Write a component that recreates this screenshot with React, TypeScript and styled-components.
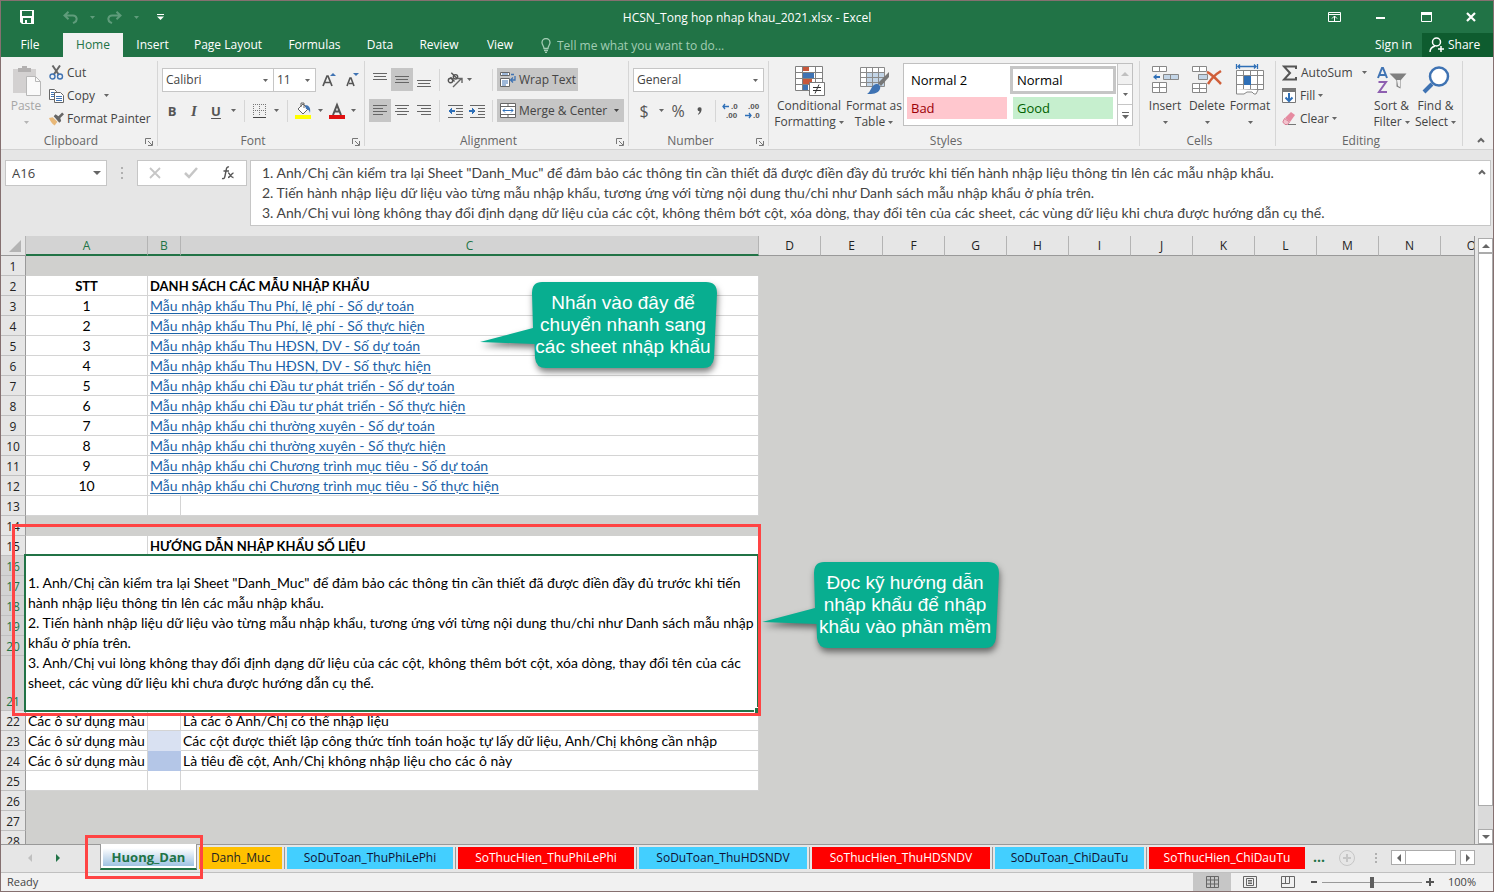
import React from "react";
import styled, { createGlobalStyle, css } from "styled-components";

const ui = `"Open Sans", "Noto Sans", sans-serif`;
const sheetFont = `Lato, "Noto Sans", sans-serif`;
const green = "#217346";

const Global = createGlobalStyle`
  * { box-sizing: border-box; }
  body { margin: 0; font-family: ${ui}; font-size: 12px; line-height: 16px; color: #444; }
  button, input, select, textarea { font: inherit; color: inherit; margin: 0; padding: 0; border: 0; background: none; }
  svg { display: block; flex: none; }
`;

/* ---------- shell ---------- */
const Shell = styled.div`
  display: flex;
  flex-direction: column;
  height: 100vh;
  overflow: hidden;
  border: 1px solid #857070;
  background: #e6e6e6;
`;
const Header = styled.header`
  background: ${green};
  color: #fff;
`;
const TitleBar = styled.div`
  display: grid;
  grid-template-columns: 1fr auto 1fr;
  align-items: center;
  height: 32px;
`;
const Title = styled.h1`
  margin: 0;
  padding-top: 2px;
  font-size: 12px;
  font-weight: 400;
`;
const QuickBar = styled.div`
  display: flex;
  align-items: center;
  height: 28px;
  padding-left: 19px;
`;
const WindowButtons = styled.div`
  display: flex;
  justify-content: flex-end;
`;
const BarButton = styled.button<{ $w: number; $dim?: boolean }>`
  display: flex;
  align-items: center;
  width: ${(p) => p.$w}px;
  height: 24px;
  justify-content: ${(p) => (p.$w > 43 ? "center" : "flex-start")};
  color: ${(p) => (p.$dim ? "#5f9c7b" : "#fff")};
`;
const TabBar = styled.nav`
  display: flex;
  height: 24px;
`;
const RibbonTab = styled.button<{ $w: number; $active?: boolean }>`
  width: ${(p) => p.$w}px;
  padding-right: ${(p) => (p.$w > 61 && p.$w < 63 ? 4 : 0)}px;
  color: ${(p) => (p.$active ? green : "#fff")};
  background: ${(p) => (p.$active ? "#f1f1f1" : "transparent")};
`;
const TellMe = styled.label`
  display: flex;
  align-items: center;
  gap: 6px;
  padding-left: 14px;
  color: #a2cdb4;
  input { width: 190px; height: 20px; }
  input::placeholder { color: #a2cdb4; opacity: 1; }
`;
const Account = styled.div`
  display: flex;
  margin-left: auto;
`;
const SignIn = styled.button`
  padding: 0 10px;
`;
const Share = styled.button`
  display: flex;
  align-items: center;
  gap: 3px;
  width: 71px;
  padding-left: 7px;
  background: #0e5c2f;
`;

/* ---------- ribbon ---------- */
const Ribbon = styled.div`
  display: flex;
  height: 93px;
  padding: 4px 0 3px;
  background: #f1f1f1;
  border-bottom: 1px solid #d2d2d2;
`;
const GroupBox = styled.section<{ $w: number }>`
  position: relative;
  display: flex;
  flex-direction: column;
  width: ${(p) => p.$w}px;
  height: 85px;
  flex: none;
  border-right: 1px solid #d6d6d6;
`;
const GroupBody = styled.div`
  display: flex;
  flex: none;
  height: 72px;
  padding: 0 4px;
`;
const GroupLabel = styled.footer`
  height: 13px;
  padding-right: 16px;
  text-align: center;
  color: #666;
`;
const Launcher = styled.button`
  position: absolute;
  right: 4px;
  bottom: 0;
  width: 8px;
  height: 8px;
`;
const BigButton = styled.button<{ $w: number; $off?: boolean }>`
  display: flex;
  flex-direction: column;
  align-items: center;
  flex: none;
  width: ${(p) => p.$w}px;
  height: 70px;
  white-space: nowrap;
  color: ${(p) => (p.$off ? "#a6a6a6" : "#444")};
`;
const BigIcon = styled.span`
  display: flex;
  align-items: center;
  height: 34px;
  margin: 2px 0 1px;
`;
const BigLine = styled.span`
  display: flex;
  align-items: center;
  justify-content: center;
  gap: 3px;
  height: 16px;
`;
const Stack = styled.div`
  display: flex;
  flex-direction: column;
  padding: 0 3px 0 2px;
`;
const SmallButton = styled.button<{ $space?: number }>`
  display: flex;
  align-items: center;
  gap: 3px;
  height: 23px;
  white-space: nowrap;
  svg:last-child:not(:first-child) { margin-left: ${(p) => p.$space ?? 0}px; }
`;
const Rows = styled.div`
  display: flex;
  flex-direction: column;
  gap: 8px;
  padding-top: 7px;
  flex: 1;
`;
const Row = styled.div`
  display: flex;
  align-items: center;
  height: 23px;
`;
const Tool = styled.button<{ $w: number; $on?: boolean }>`
  display: flex;
  align-items: center;
  justify-content: center;
  flex: none;
  width: ${(p) => p.$w}px;
  height: 23px;
  background: ${(p) => (p.$on ? "#c6c6c6" : "transparent")};
`;
const Wide = styled(Tool)`
  justify-content: flex-start;
  gap: 3px;
  padding-left: 3px;
  white-space: nowrap;
  svg:last-child:not(:first-child) { margin-left: 4px; }
`;
const Rule = styled.span<{ $l: number; $r: number }>`
  width: 1px;
  height: 22px;
  margin: 0 ${(p) => p.$r}px 0 ${(p) => p.$l}px;
  background: #d6d6d6;
`;
const Letter = styled.span<{ $kind?: "b" | "i" | "u" }>`
  font-size: 13px;
  font-weight: 700;
  color: #555;
  ${(p) => p.$kind === "i" && css`font-style: italic; font-family: "Liberation Serif", serif; font-size: 15px;`}
  ${(p) => p.$kind === "u" && css`text-decoration: underline; text-underline-offset: 2px;`}
`;
const Sign = styled.span`
  font-size: 16px;
  color: #555;
`;
const ComboBox = styled.label<{ $w: number }>`
  position: relative;
  display: block;
  width: ${(p) => p.$w}px;
  height: 24px;
  margin-right: -1px;
  background: #fff;
  border: 1px solid #c6c6c6;
  select { width: 100%; height: 100%; padding-left: 3px; appearance: none; outline: 0; }
  svg { position: absolute; right: 5px; top: 10px; pointer-events: none; }
`;

const Gallery = styled.div`
  display: flex;
  width: 230px;
  height: 63px;
  margin-top: 2px;
  background: #fff;
  border: 1px solid #c0c0c0;
`;
const GalleryGrid = styled.div`
  display: grid;
  grid-template-columns: 106px 106px;
  grid-template-rows: 28px 28px;
  padding-top: 2px;
`;
const Swatch = styled.button<{ $bg?: string; $fg: string; $on?: boolean }>`
  margin: ${(p) => (p.$on ? "0" : "3px")};
  padding-left: ${(p) => (p.$on ? 4 : 4)}px;
  text-align: left;
  font-size: 13px;
  line-height: 20px;
  color: ${(p) => p.$fg};
  background: ${(p) => p.$bg ?? "#fff"};
  border: ${(p) => (p.$on ? "3px solid #c6c6c6" : "0")};
`;
const GallerySteps = styled.div`
  display: grid;
  grid-template-rows: 21px 20px 20px;
  width: 15px;
  margin-left: auto;
  border-left: 1px solid #c6c6c6;
  button { display: grid; place-items: center; border-bottom: 1px solid #c6c6c6; }
  button:first-child { background: #f1f1f1; }
  button:last-child { border-bottom: 0; }
`;
const Collapse = styled.button`
  display: grid;
  place-items: center;
  align-self: flex-end;
  width: 20px;
  height: 12px;
  margin: 0 2px 0 auto;
`;

/* ---------- formula bar ---------- */
const FormulaBar = styled.div`
  display: flex;
  align-items: flex-start;
  padding: 10px 2px 10px 4px;
  background: #e6e6e6;
`;
const NameBox = styled.label`
  position: relative;
  width: 102px;
  height: 26px;
  background: #fff;
  border: 1px solid #c6c6c6;
  input { width: 80px; height: 24px; padding-left: 6px; outline: 0; font-size: 13px; }
  svg { position: absolute; right: 5px; top: 8px; }
`;
const Grip = styled.span`
  display: flex;
  align-items: center;
  justify-content: center;
  width: 30px;
  height: 26px;
`;
const FxBox = styled.div`
  display: flex;
  align-items: center;
  justify-content: space-around;
  width: 110px;
  height: 26px;
  margin-right: 3px;
  background: #fff;
  border: 1px solid #c6c6c6;
`;
const FormulaField = styled.div`
  display: flex;
  flex: 1;
  height: 66px;
  background: #fff;
  border: 1px solid #c6c6c6;
  textarea {
    flex: 1;
    height: 64px;
    padding: 2px 0 0 11px;
    resize: none;
    outline: 0;
    overflow: hidden;
    white-space: nowrap;
    font-family: ${sheetFont};
    font-size: 14px;
    line-height: 20px;
  }
`;
const Expand = styled.button`
  display: grid;
  place-items: center;
  width: 16px;
  height: 22px;
`;

/* ---------- grid ---------- */
const GridArea = styled.main`
  position: relative;
  display: flex;
  flex: 1;
  min-height: 0;
`;
const GridView = styled.div`
  flex: 1;
  min-width: 0;
  overflow: hidden;
  background: #d0d0ce;
  border-right: 1px solid #999;
`;
const Sheet = styled.table`
  width: 0;
  table-layout: fixed;
  border-collapse: separate;
  border-spacing: 0;
  color: #000;
  font-family: ${sheetFont};
  font-size: 14px;
  line-height: 18px;
`;
const ColHead = styled.th<{ $sel?: boolean }>`
  height: 20px;
  padding: 0;
  font: 400 12px/17px ${ui};
  color: ${(p) => (p.$sel ? green : "#222")};
  background: ${(p) => (p.$sel ? "#d3d3d3" : "#e6e6e6")};
  border-right: 1px solid #b4b4b4;
  border-bottom: ${(p) => (p.$sel ? `2px solid ${green}` : "1px solid #999")};
`;
const Corner = styled.th`
  padding: 4px 3px 3px 8px;
  background: #e6e6e6;
  border-right: 1px solid #b4b4b4;
  border-bottom: 1px solid #999;
`;
const RowHead = styled.th<{ $sel?: boolean; $h?: number }>`
  height: ${(p) => p.$h ?? 20}px;
  padding: 0;
  vertical-align: bottom;
  font: 400 12px/16px ${ui};
  color: ${(p) => (p.$sel ? green : "#222")};
  background: ${(p) => (p.$sel ? "#d3d3d3" : "#e6e6e6")};
  border-right: 1px solid #999;
  border-bottom: 1px solid #c0c0c0;
`;
const Cell = styled.td<{ $center?: boolean; $fill?: string }>`
  padding: 0 2px;
  white-space: nowrap;
  text-align: ${(p) => (p.$center ? "center" : "left")};
  background: ${(p) => p.$fill ?? "#fff"};
  border-right: 1px solid ${(p) => p.$fill ?? "#d4d4d4"};
  border-bottom: 1px solid ${(p) => p.$fill ?? "#d4d4d4"};
`;
const Heading = styled(Cell)`
  font-size: 13px;
  font-weight: 700;
`;
const Blank = styled.td`
  padding: 0;
  background: #d0d0ce;
`;
const SheetLink = styled.a`
  color: #1c63a8;
  text-underline-offset: 2px;
`;
const Merged = styled.td`
  position: relative;
  padding: 0 2px 2px;
  line-height: 20px;
  white-space: pre;
  background: #fff;
  &::before {
    content: "";
    position: absolute;
    inset: -2px 0 -1px -2px;
    border: 2px solid ${green};
  }
  &::after {
    content: "";
    position: absolute;
    right: -1px;
    bottom: -2px;
    width: 5px;
    height: 5px;
    background: ${green};
    border: solid #fff;
    border-width: 1px 0 0 1px;
  }
`;
const VScroll = styled.div`
  display: flex;
  flex-direction: column;
  width: 18px;
  padding: 2px 1px 0 3px;
  background: #e6e6e6;
`;
const ScrollButton = styled.button`
  display: grid;
  place-items: center;
  flex: none;
  width: 15px;
  height: 15px;
  background: #fff;
  border: 1px solid #ababab;
`;
const VTrack = styled.div`
  flex: 1;
  width: 15px;
  background: #dadada;
`;
const VThumb = styled.div`
  height: 96%;
  background: #fff;
  border: 1px solid #ababab;
`;

/* ---------- annotations ---------- */
const RedFrame = styled.div`
  position: absolute;
  left: 11px;
  top: 288px;
  width: 749px;
  height: 192px;
  border: 3px solid #ff4444;
`;
const CalloutBox = styled.div<{ $x: number; $y: number }>`
  position: absolute;
  left: ${(p) => p.$x}px;
  top: ${(p) => p.$y}px;
  width: 238px;
  height: 87px;
  svg { position: absolute; left: 0; top: 0; overflow: visible; filter: drop-shadow(1px 4px 3px rgba(0, 0, 0, 0.5)); }
  p {
    position: relative;
    margin: 0 0 0 48px;
    padding-top: 10px;
    text-align: center;
    white-space: pre;
    color: #fff;
    font: 19px/22px "Liberation Sans", Arial, sans-serif;
  }
`;

/* ---------- sheet tabs and status ---------- */
const TabStrip = styled.div`
  display: flex;
  height: 28px;
  border-top: 1px solid #999;
  background: #e6e6e6;
`;
const TabNav = styled.div`
  display: flex;
  align-items: center;
  gap: 20px;
  width: 99px;
  height: 25px;
  padding-left: 25px;
`;
const ActiveTab = styled.button`
  position: relative;
  width: 97px;
  height: 26px;
  margin: -1px 2px 0 0;
  padding: 4px 2px 3px;
  background: #fff;
  border: solid #999;
  border-width: 0 1px;
  border-bottom: 2px solid ${green};
  color: ${green};
  font-size: 13px;
  font-weight: 700;
  span {
    display: block;
    line-height: 18px;
    background: linear-gradient(#fff, #cfe0f0 50%, #9fc3e2);
  }
  &::after {
    content: "";
    position: absolute;
    inset: -9px -7px -11px -16px;
    border: 3px solid #ff4444;
  }
`;
const SheetTab = styled.button<{ $w: number; $bg: string; $fg: string }>`
  width: ${(p) => p.$w}px;
  height: 22px;
  margin-top: 2px;
  background: ${(p) => p.$bg};
  color: ${(p) => p.$fg};
`;
const TabGap = styled.span`
  width: 1px;
  height: 22px;
  margin: 2px 2px 0;
  background: #999;
`;
const StripEnd = styled.div`
  display: flex;
  align-items: center;
  height: 25px;
  margin-left: auto;
  padding-right: 18px;
`;
const AddSheet = styled.button`
  margin-right: 6px;
`;
const HThumb = styled.div`
  width: 51px;
  height: 15px;
  margin: 0 4px 0 -1px;
  background: #fff;
  border: 1px solid #ababab;
`;
const More = styled.button`
  height: 24px;
  margin-left: 8px;
  color: ${green};
  font-weight: 700;
  font-size: 14px;
`;
const Status = styled.footer`
  display: flex;
  align-items: center;
  height: 19px;
  padding: 0 17px 0 6px;
  border-top: 1px solid #c0c0c0;
  background: #f1f1f1;
  font-size: 11px;
`;
const ViewButton = styled.button<{ $on?: boolean }>`
  display: grid;
  place-items: center;
  width: 38px;
  height: 18px;
  background: ${(p) => (p.$on ? "#c6c6c6" : "transparent")};
`;
const StatusEnd = styled.div`
  display: flex;
  align-items: center;
  margin-left: auto;
`;
const Slider = styled.input`
  width: 100px;
  height: 12px;
  margin: 0 3px;
  appearance: none;
  background: linear-gradient(#999, #999) center / 100% 1px no-repeat;
  &::-webkit-slider-thumb { appearance: none; width: 4px; height: 11px; background: #5f5f5f; }
`;
const ZoomValue = styled.output`
  width: 41px;
  text-align: right;
`;

/* ---------- icons ---------- */
const Arrow = ({ c = "#666", w = 5 }: { c?: string; w?: number }) => (
  <svg width={w} height="3" viewBox="0 0 6 3" preserveAspectRatio="none"><path d="M0 0h6L3 3z" fill={c} /></svg>
);
const Tri = ({ d, c = "#666" }: { d: "u" | "d" | "l" | "r"; c?: string }) => {
  const path = { u: "M0 6h8L4 2z", d: "M0 2h8L4 6z", l: "M6 0v8L2 4z", r: "M2 0v8l4-4z" }[d];
  return <svg width="8" height="8" viewBox="0 0 8 8"><path d={path} fill={c} /></svg>;
};
const Lines = ({ rows, top = 0 }: { rows: [number, number][]; top?: number }) => (
  <svg width="15" height="17" viewBox="0 0 15 17" shapeRendering="crispEdges">
    {rows.map(([x, w], i) => <rect key={i} x={x} y={top + i * 3} width={w} height="1" fill="#666" />)}
  </svg>
);
const Caret = () => (
  <svg width="8" height="6" viewBox="0 0 8 6" fill="none" stroke="#666" strokeWidth="2"><path d="M1 5l3-3 3 3" /></svg>
);
const SaveIcon = () => (
  <svg width="14" height="14" viewBox="0 0 14 14"><path fill="#fff" fillRule="evenodd" d="M0 0h14v14H2l-2-2zM2 1v5h10V1zM3 8v5h2v-3h2v3h4V8z" /></svg>
);
const UndoIcon = ({ flip }: { flip?: boolean }) => (
  <svg width="15" height="13" viewBox="0 0 15 13" fill="none" stroke="currentColor" strokeWidth="2" transform={flip ? "scale(-1 1)" : undefined}>
    <path d="M5.500 .8L1.500 4.500l4 3.700M1.500 4.500H10c4 0 5 5 1.500 6.800L10 12" />
  </svg>
);
const PasteIcon = () => (
  <svg width="29" height="31" viewBox="0 0 29 31">
    <path d="M1 4h23v24H1z" fill="#d3d1d1" />
    <path d="M6 3h4V1h5v2h4v4H6z" fill="#b3b1b1" />
    <path d="M14.500 11.500h9l5 5v14h-14z" fill="#fafafa" stroke="#b8b8b8" />
    <path d="M23.500 11.500v5h5" fill="none" stroke="#b8b8b8" />
  </svg>
);
const CutIcon = () => (
  <svg width="15" height="15" viewBox="0 0 15 15" fill="none">
    <path d="M3.500 .5l6.500 9.500M11 .5L4.500 10" stroke="#666" strokeWidth="2" />
    <circle cx="3.500" cy="11.500" r="2.500" stroke="#3f73b3" strokeWidth="1.400" /><circle cx="11" cy="11.500" r="2.500" stroke="#3f73b3" strokeWidth="1.400" />
  </svg>
);
const CopyIcon = () => (
  <svg width="15" height="15" viewBox="0 0 15 15" stroke="#666">
    <path d="M.5 1.500h5l2 2v8h-7z" fill="#fff" /><path d="M2 4.500h3M2 6.500h3M2 8.500h3" stroke="#3f73b3" />
    <path d="M5.500 4.500h6l3 3v7h-9z" fill="#fff" /><path d="M7 8.500h6M7 10.500h6M7 12.500h6" stroke="#3f73b3" />
  </svg>
);
const BrushIcon = () => (
  <svg width="15" height="14" viewBox="0 0 16 14">
    <path d="M0 6l4-1 5 5-3 4C3 12 1 9 0 6z" fill="#e8b878" /><path d="M5 4l2-2 3 2 4-4 2 2-4 4 1 3-2 2z" fill="#666" />
  </svg>
);
const SizeA = ({ up }: { up?: boolean }) => (
  <svg width="15" height="16" viewBox="0 0 15 16">
    {up ? <path d="M1 14L5 4h1l4 10M3 10.500h5" fill="none" stroke="#555" strokeWidth="1.700" /> : <path d="M2 14l3-8h1l3 8M4 11.500h4" fill="none" stroke="#555" strokeWidth="1.600" />}
    <path d={up ? "M8 4h6l-3-3z" : "M8 1h6l-3 3z"} fill="#3f73b3" />
  </svg>
);
const BordersIcon = () => (
  <svg width="14" height="14" viewBox="0 0 14 14" stroke="#777" shapeRendering="crispEdges">
    <path d="M.5 0v12M6.500 0v12M12.500 0v12M0 .5h13M0 6.500h13" strokeDasharray="1 1" /><path d="M0 13.500h13" stroke="#444" strokeWidth="1" />
  </svg>
);
const FillIcon = () => (
  <svg width="17" height="17" viewBox="0 0 17 17">
    <path d="M3 7l5-5 5 5-5 5z" fill="#fff" stroke="#666" /><path d="M6 5V1h3v5" fill="none" stroke="#666" />
    <path d="M10 3c4 0 6 3 5 8-1-3-2-4-4-4z" fill="#3f73b3" /><path d="M0 13h16v4H0z" fill="#ffff00" />
  </svg>
);
const FontColorIcon = () => (
  <svg width="16" height="17" viewBox="0 0 16 17">
    <path d="M4 13L8 3l4 10M5.500 9.500h5" fill="none" stroke="#555" strokeWidth="2" /><path d="M0 13h16v4H0z" fill="#e01010" />
  </svg>
);
const OrientIcon = () => (
  <svg width="16" height="16" viewBox="0 0 16 16" fill="none" stroke="#555" strokeWidth="1.400">
    <circle cx="3.500" cy="8.500" r="2.200" /><path d="M3.500 5.200l4 4.200" /><circle cx="8.500" cy="4.800" r="2.200" /><path d="M4.300 0.800l5.800 5.700" />
    <path d="M6 15l8-8M10.500 6.500H15V11" stroke="#666" />
  </svg>
);
const IndentIcon = ({ right }: { right?: boolean }) => (
  <svg width="17" height="14" viewBox="0 0 17 14" shapeRendering="crispEdges">
    <path d="M1 1.500h15M9 4.500h7M9 7.500h7M9 10.500h7M1 13.500h15" stroke="#666" fill="none" />
    <path d={right ? "M0 6h3V3.500L7 7l-4 3.500V8H0z" : "M8 6H5V3.500L1 7l4 3.500V8h3z"} fill="#2e6fb7" />
  </svg>
);
const WrapIcon = () => (
  <svg width="16" height="16" viewBox="0 0 16 16" fill="none">
    <path d="M.5.5h9v3h-9zM.5 6.500h9v8h-9z" fill="#fff" stroke="#666" /><path d="M2 2h6M2 9h6M2 11h6M2 13h4" stroke="#3f73b3" />
    <path d="M11 2.500h3M15 4v4h-4M13 5.500L10.500 8l2.500 2.500" stroke="#3f73b3" strokeWidth="1.300" />
  </svg>
);
const MergeIcon = () => (
  <svg width="16" height="16" viewBox="0 0 16 16" fill="none" stroke="#666">
    <path d="M.5.5h15v14H.5z" fill="#fff" /><path d="M.5 3.500h15M.5 11.500h15M8 0v4M8 11v4" /><path d="M3 7.500h10M5 5.500l-2 2 2 2M11 5.500l2 2-2 2" stroke="#2e6fb7" />
  </svg>
);
const Decimals = ({ less }: { less?: boolean }) => (
  <svg width="18" height="20" viewBox="0 0 18 20" fontFamily="Liberation Sans, sans-serif" fontSize="8" fontWeight="700" fill="#555">
    <text x={less ? 4 : 9} y="8">{less ? ".00" : ".0"}</text>
    <text x={less ? 9 : 4} y="17">{less ? ".0" : ".00"}</text>
    <path d={less ? "M1 14.500h6M5 12l2 2.500L5 17" : "M7 5.500H1M3 3L1 5.500 3 8"} stroke="#2e6fb7" strokeWidth="1.300" fill="none" />
  </svg>
);
const LaunchIcon = () => (
  <svg width="8" height="8" viewBox="0 0 8 8" fill="none" stroke="#777"><path d="M.5 6V.5H6M3 3l4 4M7.500 3v4.500H3" /></svg>
);
const CondIcon = () => (
  <svg width="31" height="31" viewBox="0 0 31 31">
    <path d="M1.500 1.500h27v24h-27z" fill="#fff" />
    <path d="M9 1h6v5H9zM9 14h9v5H9z" fill="#c8573a" /><path d="M9 8h11v5H9zM9 20h5v5H9z" fill="#3f73b3" />
    <path d="M1.500 1.500h27v24h-27zM1.500 7.500h27M1.500 13.500h27M1.500 19.500h27M8.500 1v24M21.500 1v24" fill="none" stroke="#808080" />
    <path d="M15.500 17.500h15v13h-15z" fill="#fff" stroke="#777" /><path d="M19 22.500h8M19 25.500h8M25 19.500l-4 9" stroke="#333" fill="none" />
  </svg>
);
const TableIcon = () => (
  <svg width="30" height="30" viewBox="0 0 30 30">
    <path d="M1.500 2.500h24v19h-24z" fill="#fff" /><path d="M7 8h18v13H7z" fill="#c3d5e7" />
    <path d="M1.500 2.500h24v19h-24zM1.500 7.500h24M1.500 12.500h24M1.500 17.500h24M7.500 2v19M13.500 2v19M19.500 2v19" fill="none" stroke="#8a8a8a" />
    <path d="M30 7v5l-8 9-3-3z" fill="#777" /><path d="M17 19c3 0 5 2 4 5-2 5-8 5-13 5 4-2 4-9 9-10z" fill="#3f73b3" />
  </svg>
);
const InsertIcon = () => (
  <svg width="27" height="28" viewBox="0 0 27 28" fill="#fff" stroke="#888">
    <path d="M.5.5h14v5H.5zM7.500.5v5M.5 16.500h14v10H.5zM7.500 16.500v10M.5 21.500h14" /><path d="M11.500 8.500h15v5h-15zM18.500 8.500v5" fill="#c3d5e7" />
    <path d="M1 11l3.500-3v2H8v2H4.500v2z" fill="#2e6fb7" stroke="none" />
  </svg>
);
const DeleteIcon = () => (
  <svg width="30" height="28" viewBox="0 0 30 28" fill="#fff" stroke="#888">
    <path d="M.5.5h14v5H.5zM7.500.5v5M.5 17.500h14v9H.5zM7.500 17.500v9M.5 22.500h14" /><path d="M6.500 8.500h9v5h-9z" fill="#c3d5e7" />
    <path d="M15 6c5 2 9 7 14 12M29 5c-5 3-10 8-13 13" fill="none" stroke="#d05f3a" strokeWidth="2.500" />
  </svg>
);
const FormatIcon = () => (
  <svg width="30" height="32" viewBox="0 0 30 32" fill="none" stroke="#888">
    <path d="M1.500 6.500h27v19h-27z" fill="#fff" /><path d="M1.500 11.500h27M1.500 20.500h27M8.500 6v20M15.500 6v20M22.500 6v20" />
    <path d="M9 12h7v9H9z" fill="#2e6fb7" stroke="none" /><path d="M1.500 25v5H9l3-2h5l2 2h2l2-4" fill="#fff" />
    <path d="M1.500 0v5M22.500 0v5M3 2.500h18M5 .5l-2 2 2 2M19 .5l2 2-2 2" stroke="#2e6fb7" strokeWidth="1.300" />
  </svg>
);
const SumIcon = () => (
  <svg width="16" height="16" viewBox="0 0 16 16"><path d="M14 4V1.500H2L8 8l-6 6.500h12V12" fill="none" stroke="#555" strokeWidth="2" /></svg>
);
const FillDownIcon = () => (
  <svg width="15" height="16" viewBox="0 0 15 16"><path d="M.5.5h13v14H.5z" fill="#fff" stroke="#777" /><path d="M0 0h14v4H0z" fill="#777" /><path d="M7 5v8M3.500 9.500L7 13l3.500-3.500" fill="none" stroke="#2e6fb7" strokeWidth="2" /></svg>
);
const EraserIcon = () => (
  <svg width="15" height="14" viewBox="0 0 15 14"><path d="M9 0l4 3-5 7-5-4z" fill="#e68aa0" /><path d="M2.500 6.500L7.500 10l-2 2.500H3L.8 10z" fill="#f3c2cd" stroke="#d97f95" /><path d="M6 12.500h8" stroke="#777" /></svg>
);
const SortIcon = () => (
  <svg width="30" height="28" viewBox="0 0 30 28" fill="none">
    <path d="M1 12L5 2h1l4 10M3 9h6" stroke="#3f73b3" strokeWidth="2" /><path d="M1.500 16H9L2 26h8" stroke="#8e5fb0" strokeWidth="2" />
    <path d="M12.500 7.500h17l-6 7v8l-4-2v-6z" fill="#808080" /><path d="M20 14h3v7l-2-1z" fill="#eee" />
  </svg>
);
const FindIcon = () => (
  <svg width="28" height="28" viewBox="0 0 28 28" fill="none" stroke="#3f73b3"><circle cx="17" cy="10.500" r="9" fill="#fff" strokeWidth="2.500" /><path d="M10 18l-8 8" strokeWidth="4" /></svg>
);

/* ---------- small composites ---------- */
const Group = ({ label, w, launch, children }: { label: string; w: number; launch?: boolean; children: React.ReactNode }) => (
  <GroupBox $w={w} aria-label={label}>
    <GroupBody>{children}</GroupBody>
    <GroupLabel>{label}</GroupLabel>
    {launch && <Launcher aria-label={`${label} settings`}><LaunchIcon /></Launcher>}
  </GroupBox>
);
const Combo = ({ name, value, w }: { name: string; value: string; w: number }) => (
  <ComboBox $w={w}>
    <select aria-label={name} defaultValue={value}><option>{value}</option></select>
    <Arrow />
  </ComboBox>
);
const Big = ({ icon, a, b, w, off }: { icon: React.ReactNode; a: string; b?: string; w: number; off?: boolean }) => (
  <BigButton $w={w} $off={off}>
    <BigIcon>{icon}</BigIcon>
    <BigLine>{a}</BigLine>
    <BigLine>{b}<Arrow c={off ? "#b5b5b5" : undefined} /></BigLine>
  </BigButton>
);
const Callout = ({ x, y, text }: { x: number; y: number; text: string }) => (
  <CalloutBox $x={x} $y={y}>
    <svg width="238" height="87" viewBox="0 0 238 87">
      <path fill="#08ae90" d="M62 0H226Q237 0 237 11L234 76Q233 86 223 86H66Q56 86 55 76L54.500 62L0 60L53 46L52 11Q52 0 62 0Z" />
    </svg>
    <p>{text}</p>
  </CalloutBox>
);

/* ---------- data ---------- */
const ribbonTabs = [
  { t: "File", w: 62 }, { t: "Home", w: 60 }, { t: "Insert", w: 59 }, { t: "Page Layout", w: 92 }, { t: "Formulas", w: 81 },
  { t: "Data", w: 50 }, { t: "Review", w: 68 }, { t: "View", w: 54 },
];
const columns = "DEFGHIJKLMNOPQRSTUVWXYZ".split("");
const links = [
  "Mẫu nhập khẩu Thu Phí, lệ phí - Số dự toán",
  "Mẫu nhập khẩu Thu Phí, lệ phí - Số thực hiện",
  "Mẫu nhập khẩu Thu HĐSN, DV - Số dự toán",
  "Mẫu nhập khẩu Thu HĐSN, DV - Số thực hiện",
  "Mẫu nhập khẩu chi Đầu tư phát triển - Số dự toán",
  "Mẫu nhập khẩu chi Đầu tư phát triển - Số thực hiện",
  "Mẫu nhập khẩu chi thường xuyên - Số dự toán",
  "Mẫu nhập khẩu chi thường xuyên - Số thực hiện",
  "Mẫu nhập khẩu chi Chương trình mục tiêu - Số dự toán",
  "Mẫu nhập khẩu chi Chương trình mục tiêu - Số thực hiện",
];
const guide = `1. Anh/Chị cần kiểm tra lại Sheet "Danh_Muc" để đảm bảo các thông tin cần thiết đã được điền đầy đủ trước khi tiến
hành nhập liệu thông tin lên các mẫu nhập khẩu.
2. Tiến hành nhập liệu dữ liệu vào từng mẫu nhập khẩu, tương ứng với từng nội dung thu/chi như Danh sách mẫu nhập
khẩu ở phía trên.
3. Anh/Chị vui lòng không thay đổi định dạng dữ liệu của các cột, không thêm bớt cột, xóa dòng, thay đổi tên của các
sheet, các vùng dữ liệu khi chưa được hướng dẫn cụ thể.`;
const formula = `1. Anh/Chị cần kiểm tra lại Sheet "Danh_Muc" để đảm bảo các thông tin cần thiết đã được điền đầy đủ trước khi tiến hành nhập liệu thông tin lên các mẫu nhập khẩu.
2. Tiến hành nhập liệu dữ liệu vào từng mẫu nhập khẩu, tương ứng với từng nội dung thu/chi như Danh sách mẫu nhập khẩu ở phía trên.
3. Anh/Chị vui lòng không thay đổi định dạng dữ liệu của các cột, không thêm bớt cột, xóa dòng, thay đổi tên của các sheet, các vùng dữ liệu khi chưa được hướng dẫn cụ thể.`;
const legend = [
  { n: 22, fill: undefined, t: "Là các ô Anh/Chị có thể nhập liệu" },
  { n: 23, fill: "#d9e1f2", t: "Các cột được thiết lập công thức tính toán hoặc tự lấy dữ liệu, Anh/Chị không cần nhập" },
  { n: 24, fill: "#b4c6e7", t: "Là tiêu đề cột, Anh/Chị không nhập liệu cho các ô này" },
];
const sheets = [
  { t: "Danh_Muc", w: 83, bg: "#ffc000", fg: "#222" },
  { t: "SoDuToan_ThuPhiLePhi", w: 166, bg: "#43cfff", fg: "#113" },
  { t: "SoThucHien_ThuPhiLePhi", w: 176, bg: "#ff0000", fg: "#fff" },
  { t: "SoDuToan_ThuHDSNDV", w: 168, bg: "#43cfff", fg: "#113" },
  { t: "SoThucHien_ThuHDSNDV", w: 178, bg: "#ff0000", fg: "#fff" },
  { t: "SoDuToan_ChiDauTu", w: 149, bg: "#43cfff", fg: "#113" },
  { t: "SoThucHien_ChiDauTu", w: 156, bg: "#ff0000", fg: "#fff" },
];

export default function App() {
  return (
    <Shell>
      <Global />
      <Header>
        <TitleBar>
          <QuickBar>
            <BarButton $w={43} aria-label="Save"><SaveIcon /></BarButton>
            <BarButton $w={27} $dim aria-label="Undo"><UndoIcon /></BarButton>
            <BarButton $w={17} $dim aria-label="Undo list"><Arrow c="#5f9c7b" /></BarButton>
            <BarButton $w={27} $dim aria-label="Redo"><UndoIcon flip /></BarButton>
            <BarButton $w={23} $dim aria-label="Redo list"><Arrow c="#5f9c7b" /></BarButton>
            <BarButton $w={12} aria-label="Customize">
              <svg width="7" height="6" viewBox="0 0 7 6"><path d="M0 0h7v1H0zM0 2.500h7L3.500 6z" fill="#fff" /></svg>
            </BarButton>
          </QuickBar>
          <Title>HCSN_Tong hop nhap khau_2021.xlsx - Excel</Title>
          <WindowButtons>
            <BarButton $w={46} aria-label="Ribbon display">
              <svg width="13" height="10" viewBox="0 0 13 10" fill="none" stroke="#fff"><path d="M.5.5h12v9H.5zM.5 2.500h12M6.500 9V4M4 6.500L6.500 4 9 6.500" /></svg>
            </BarButton>
            <BarButton $w={46} aria-label="Minimize"><svg width="9" height="8" viewBox="0 0 9 8"><path d="M0 4h9v2H0z" fill="#fff" /></svg></BarButton>
            <BarButton $w={46} aria-label="Maximize"><svg width="11" height="10" viewBox="0 0 11 10"><path d="M.5.5h10v9H.5z" fill="none" stroke="#fff" /><path d="M0 0h11v3H0z" fill="#fff" /></svg></BarButton>
            <BarButton $w={44} aria-label="Close"><svg width="10" height="10" viewBox="0 0 10 10"><path d="M1 1l8 8M9 1L1 9" stroke="#fff" strokeWidth="2.200" /></svg></BarButton>
          </WindowButtons>
        </TitleBar>
        <TabBar>
          {ribbonTabs.map((r) => <RibbonTab key={r.t} $w={r.w} $active={r.t === "Home"}>{r.t}</RibbonTab>)}
          <TellMe>
            <svg width="10" height="15" viewBox="0 0 10 15" fill="none" stroke="#a2cdb4" strokeWidth="1.300"><path d="M3 10.500C3 8 1 7 1 4.500a4 4 0 0 1 8 0C9 7 7 8 7 10.500zM3 12.500h4M4 14.300h2" /></svg>
            <input aria-label="Tell me" placeholder="Tell me what you want to do..." />
          </TellMe>
          <Account>
            <SignIn>Sign in</SignIn>
            <Share>
              <svg width="16" height="16" viewBox="0 0 16 16" fill="none" stroke="#fff" strokeWidth="1.500"><circle cx="7.500" cy="5" r="4" /><path d="M1 15c0-3 2-5 5-6M12 9v6M9 12h6" /></svg>
              Share
            </Share>
          </Account>
        </TabBar>
      </Header>

      <Ribbon>
        <Group label="Clipboard" w={157} launch>
          <Big icon={<PasteIcon />} a="Paste" w={42} off />
          <Stack>
            <SmallButton><CutIcon />Cut</SmallButton>
            <SmallButton $space={6}><CopyIcon />Copy<Arrow /></SmallButton>
            <SmallButton><BrushIcon />Format Painter</SmallButton>
          </Stack>
        </Group>
        <Group label="Font" w={207} launch>
          <Rows>
            <Row>
              <Combo name="Font" value="Calibri" w={112} />
              <Combo name="Font size" value="11" w={43} />
              <Tool $w={29} aria-label="Increase font size"><SizeA up /></Tool>
              <Tool $w={16} aria-label="Decrease font size"><SizeA /></Tool>
            </Row>
            <Row>
              <Tool $w={20} aria-label="Bold"><Letter>B</Letter></Tool>
              <Tool $w={24} aria-label="Italic"><Letter $kind="i">I</Letter></Tool>
              <Tool $w={20} aria-label="Underline"><Letter $kind="u">U</Letter></Tool>
              <Tool $w={14} aria-label="Underline style"><Arrow /></Tool>
              <Rule $l={4} $r={7} />
              <Tool $w={16} aria-label="Borders"><BordersIcon /></Tool>
              <Tool $w={16} aria-label="Border style"><Arrow /></Tool>
              <Rule $l={3} $r={7} />
              <Tool $w={17} aria-label="Fill color"><FillIcon /></Tool>
              <Tool $w={16} aria-label="Fill colors"><Arrow /></Tool>
              <Tool $w={18} aria-label="Font color"><FontColorIcon /></Tool>
              <Tool $w={14} aria-label="Font colors"><Arrow /></Tool>
            </Row>
          </Rows>
        </Group>
        <Group label="Alignment" w={264} launch>
          <Rows>
            <Row>
              <Tool $w={22} aria-label="Top align"><Lines top={2} rows={[[0, 14], [1, 12], [0, 14]]} /></Tool>
              <Tool $w={22} $on aria-label="Middle align"><Lines top={5} rows={[[0, 14], [1, 12], [0, 14]]} /></Tool>
              <Tool $w={22} aria-label="Bottom align"><Lines top={9} rows={[[0, 14], [1, 12], [0, 14]]} /></Tool>
              <Rule $l={4} $r={6} />
              <Tool $w={18} aria-label="Orientation"><OrientIcon /></Tool>
              <Tool $w={10} aria-label="Orientation menu"><Arrow /></Tool>
              <Rule $l={18} $r={4} />
              <Wide $w={81} $on><WrapIcon />Wrap Text</Wide>
            </Row>
            <Row>
              <Tool $w={22} $on aria-label="Align left"><Lines top={3} rows={[[0, 14], [0, 10], [0, 14], [0, 10]]} /></Tool>
              <Tool $w={22} aria-label="Center"><Lines top={3} rows={[[0, 14], [2, 10], [0, 14], [2, 10]]} /></Tool>
              <Tool $w={22} aria-label="Align right"><Lines top={3} rows={[[0, 14], [4, 10], [0, 14], [4, 10]]} /></Tool>
              <Rule $l={4} $r={6} />
              <Tool $w={18} aria-label="Decrease indent"><IndentIcon /></Tool>
              <Tool $w={26} aria-label="Increase indent"><IndentIcon right /></Tool>
              <Rule $l={2} $r={4} />
              <Wide $w={127} $on><MergeIcon />Merge &amp; Center<Arrow c="#444" /></Wide>
            </Row>
          </Rows>
        </Group>
        <Group label="Number" w={140} launch>
          <Rows>
            <Row><Combo name="Number format" value="General" w={131} /></Row>
            <Row>
              <Tool $w={22} aria-label="Currency"><Sign>$</Sign></Tool>
              <Tool $w={12} aria-label="Currencies"><Arrow /></Tool>
              <Tool $w={22} aria-label="Percent"><Sign>%</Sign></Tool>
              <Tool $w={20} aria-label="Comma style"><svg width="5" height="8" viewBox="0 0 6 9"><path d="M3 0a2.300 2.300 0 0 1 2.500 2.500C5.500 5.500 4 7.500 1.500 9L1 8.200C2.300 7.200 3 6 3 4.800A2.400 2.400 0 1 1 3 0z" fill="#555" /></svg></Tool>
              <Rule $l={6} $r={5} />
              <Tool $w={20} aria-label="Increase decimal"><Decimals /></Tool>
              <Tool $w={23} aria-label="Decrease decimal"><Decimals less /></Tool>
            </Row>
          </Rows>
        </Group>
        <Group label="Styles" w={371}>
          <Big icon={<CondIcon />} a="Conditional" b="Formatting" w={72} />
          <Big icon={<TableIcon />} a="Format as" b="Table" w={58} />
          <Gallery>
            <GalleryGrid>
              <Swatch $fg="#000">Normal 2</Swatch>
              <Swatch $fg="#000" $on>Normal</Swatch>
              <Swatch $fg="#9c0006" $bg="#ffc7ce">Bad</Swatch>
              <Swatch $fg="#006100" $bg="#c6efce">Good</Swatch>
            </GalleryGrid>
            <GallerySteps>
              <button aria-label="Previous"><Tri d="u" c="#c0c0c0" /></button>
              <button aria-label="Next"><Arrow /></button>
              <button aria-label="All styles"><svg width="7" height="7" viewBox="0 0 7 7"><path d="M0 0h7v1H0zM0 3h7L3.500 7z" fill="#666" /></svg></button>
            </GallerySteps>
          </Gallery>
        </Group>
        <Group label="Cells" w={136}>
          <Big icon={<InsertIcon />} a="Insert" w={42} />
          <Big icon={<DeleteIcon />} a="Delete" w={42} />
          <Big icon={<FormatIcon />} a="Format" w={44} />
        </Group>
        <Group label="Editing" w={187}>
          <Stack>
            <SmallButton $space={6}><SumIcon />AutoSum<Arrow /></SmallButton>
            <SmallButton><FillDownIcon />Fill<Arrow /></SmallButton>
            <SmallButton><EraserIcon />Clear<Arrow /></SmallButton>
          </Stack>
          <Big icon={<SortIcon />} a="Sort &amp;" b="Filter" w={44} />
          <Big icon={<FindIcon />} a="Find &amp;" b="Select" w={44} />
        </Group>
        <Collapse aria-label="Collapse ribbon"><Caret /></Collapse>
      </Ribbon>

      <FormulaBar>
        <NameBox><input aria-label="Name box" defaultValue="A16" /><Tri d="d" /></NameBox>
        <Grip><svg width="2" height="12" viewBox="0 0 2 12"><path d="M0 0h2v2H0zM0 5h2v2H0zM0 10h2v2H0z" fill="#b0b0b0" /></svg></Grip>
        <FxBox>
          <button aria-label="Cancel"><svg width="12" height="12" viewBox="0 0 12 12"><path d="M1 1l10 10M11 1L1 11" stroke="#c6c6c6" strokeWidth="1.800" /></svg></button>
          <button aria-label="Enter"><svg width="14" height="12" viewBox="0 0 14 12"><path d="M1 6l4 4 8-9" fill="none" stroke="#c6c6c6" strokeWidth="2.500" /></svg></button>
          <button aria-label="Insert function"><svg width="14" height="14" viewBox="0 0 14 14" fill="none" stroke="#555" strokeWidth="1.400"><path d="M8 1C6 .5 5.500 2 5 5L4 10c-.4 2-1 3-3 2.500M2.500 5H8M7 7c2-.5 2 5 5.500 4.500M12.500 7C10.500 7 9 11.500 7 11.500" /></svg></button>
        </FxBox>
        <FormulaField>
          <textarea aria-label="Formula" defaultValue={formula} />
          <Expand aria-label="Collapse formula bar"><Caret /></Expand>
        </FormulaField>
      </FormulaBar>

      <GridArea>
        <GridView>
          <Sheet>
            <colgroup>
              <col style={{ width: 25 }} /><col style={{ width: 122 }} /><col style={{ width: 33 }} /><col style={{ width: 578 }} />
              {columns.map((c) => <col key={c} style={{ width: 62 }} />)}
            </colgroup>
            <thead>
              <tr>
                <Corner><svg width="12" height="12" viewBox="0 0 12 12"><path d="M12 0v12H0z" fill="#b4b4b4" /></svg></Corner>
                <ColHead $sel>A</ColHead><ColHead $sel>B</ColHead><ColHead $sel>C</ColHead>
                {columns.map((c) => <ColHead key={c}>{c}</ColHead>)}
              </tr>
            </thead>
            <tbody>
              <tr><RowHead>1</RowHead><Blank colSpan={26} /></tr>
              <tr><RowHead>2</RowHead><Heading $center>STT</Heading><Heading colSpan={2}>DANH SÁCH CÁC MẪU NHẬP KHẨU</Heading></tr>
              {links.map((t, i) => (
                <tr key={t}>
                  <RowHead>{i + 3}</RowHead><Cell $center>{i + 1}</Cell>
                  <Cell colSpan={2}><SheetLink href="#sheet">{t}</SheetLink></Cell>
                </tr>
              ))}
              <tr><RowHead>13</RowHead><Cell /><Cell /><Cell /></tr>
              <tr><RowHead>14</RowHead><Blank colSpan={26} /></tr>
              <tr><RowHead>15</RowHead><Cell /><Heading colSpan={2}>HƯỚNG DẪN NHẬP KHẨU SỐ LIỆU</Heading></tr>
              <tr><RowHead $sel>16</RowHead><Merged colSpan={3} rowSpan={6}>{guide}</Merged></tr>
              {[17, 18, 19, 20].map((n) => <tr key={n}><RowHead $sel>{n}</RowHead></tr>)}
              <tr><RowHead $sel $h={55}>21</RowHead></tr>
              {legend.map((l) => (
                <tr key={l.n}><RowHead>{l.n}</RowHead><Cell>Các ô sử dụng màu</Cell><Cell $fill={l.fill} /><Cell>{l.t}</Cell></tr>
              ))}
              <tr><RowHead>25</RowHead><Cell /><Cell /><Cell /></tr>
              {[26, 27, 28].map((n) => <tr key={n}><RowHead>{n}</RowHead></tr>)}
            </tbody>
          </Sheet>
        </GridView>
        <VScroll>
          <ScrollButton aria-label="Scroll up"><Tri d="u" /></ScrollButton>
          <VTrack><VThumb /></VTrack>
          <ScrollButton aria-label="Scroll down"><Tri d="d" /></ScrollButton>
        </VScroll>
        <RedFrame />
        <Callout x={479} y={46} text={"Nhấn vào đây để\nchuyển nhanh sang\ncác sheet nhập khẩu"} />
        <Callout x={761} y={326} text={"Đọc kỹ hướng dẫn\nnhập khẩu để nhập\nkhẩu vào phần mềm"} />
      </GridArea>

      <TabStrip>
        <TabNav>
          <Tri d="l" c="#c0c0c0" />
          <Tri d="r" c={green} />
        </TabNav>
        <ActiveTab><span>Huong_Dan</span></ActiveTab>
        {sheets.map((s, i) => (
          <React.Fragment key={s.t}>
            {i > 0 && <TabGap />}
            <SheetTab $w={s.w} $bg={s.bg} $fg={s.fg}>{s.t}</SheetTab>
          </React.Fragment>
        ))}
        <More>...</More>
        <StripEnd>
          <AddSheet aria-label="New sheet"><svg width="16" height="16" viewBox="0 0 16 16" fill="none" stroke="#c6c6c6"><circle cx="8" cy="8" r="7.500" /><path d="M8 4v8M4 8h8" strokeWidth="2" /></svg></AddSheet>
          <Grip><svg width="2" height="10" viewBox="0 0 2 10"><path d="M0 0h2v2H0zM0 4h2v2H0zM0 8h2v2H0z" fill="#b0b0b0" /></svg></Grip>
          <ScrollButton aria-label="Scroll left"><Tri d="l" /></ScrollButton>
          <HThumb />
          <ScrollButton aria-label="Scroll right"><Tri d="r" /></ScrollButton>
        </StripEnd>
      </TabStrip>
      <Status>
        Ready
        <StatusEnd>
          <ViewButton $on aria-label="Normal view"><svg width="13" height="12" viewBox="0 0 13 12" fill="none" stroke="#666"><path d="M.5.5h12v11H.5zM4.500 0v12M8.500 0v12M0 4h13M0 8h13" /></svg></ViewButton>
          <ViewButton aria-label="Page layout"><svg width="14" height="12" viewBox="0 0 14 12" fill="none" stroke="#666"><path d="M.5.5h13v11H.5zM3.500 2.500h7v7h-7zM5 4.500h4M5 6h4M5 7.500h4" /></svg></ViewButton>
          <ViewButton aria-label="Page break preview"><svg width="14" height="12" viewBox="0 0 14 12" fill="none" stroke="#666"><path d="M.5.5h13v11H.5zM.5 7.500h8v-7M4.500 0v7" /></svg></ViewButton>
          <button aria-label="Zoom out"><svg width="12" height="8" viewBox="0 0 12 8"><path d="M4 3h6v2H4z" fill="#555" /></svg></button>
          <Slider type="range" aria-label="Zoom" min="0" max="200" defaultValue="100" />
          <button aria-label="Zoom in"><svg width="10" height="8" viewBox="0 0 10 8"><path d="M1 3h3V0h2v3h3v2H6v3H4V5H1z" fill="#555" /></svg></button>
          <ZoomValue>100%</ZoomValue>
        </StatusEnd>
      </Status>
    </Shell>
  );
}
